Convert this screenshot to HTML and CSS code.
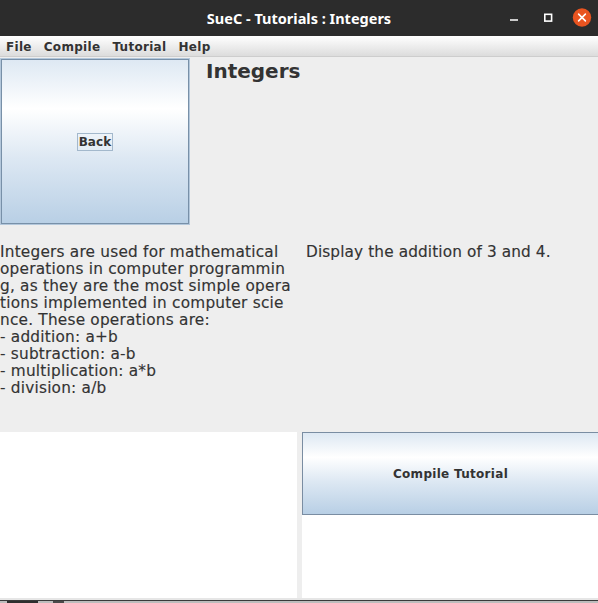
FILE: index.html
```html
<!DOCTYPE html>
<html lang="en">
<head>
<meta charset="utf-8">
<title>SueC - Tutorials : Integers</title>
<link rel="stylesheet" href="styles.css">
</head>
<body>
<div class="window">
  <header class="titlebar">
    <div class="tb-side"></div>
    <div class="title">SueC - Tutorials : Integers</div>
    <div class="tb-side tb-controls">
      <svg class="controls" width="98" height="36" viewBox="0 0 98 36">
        <line x1="10" y1="20" x2="18" y2="20" stroke="#ffffff" stroke-width="1.5"/>
        <rect x="44.8" y="14.3" width="6.8" height="6.8" fill="none" stroke="#ffffff" stroke-width="1.6"/>
        <circle cx="82" cy="17.5" r="9.2" fill="#e95420"/>
        <line x1="78.6" y1="14.1" x2="85.4" y2="20.9" stroke="#ffffff" stroke-width="1.6" stroke-linecap="round"/>
        <line x1="85.4" y1="14.1" x2="78.6" y2="20.9" stroke="#ffffff" stroke-width="1.6" stroke-linecap="round"/>
      </svg>
    </div>
  </header>
  <nav class="menubar">
    <span class="menu">File</span>
    <span class="menu">Compile</span>
    <span class="menu">Tutorial</span>
    <span class="menu">Help</span>
  </nav>
  <main class="content">
    <section class="top">
      <button class="btn back" type="button"><span class="focus">Back</span></button>
      <h1 class="heading">Integers</h1>
    </section>
    <section class="texts">
      <div class="textarea">Integers are used for mathematical
operations in computer programmin
g, as they are the most simple opera
tions implemented in computer scie
nce. These operations are:
- addition: a+b
- subtraction: a-b
- multiplication: a*b
- division: a/b</div>
      <div class="task">Display the addition of 3 and 4.</div>
    </section>
    <section class="bottom">
      <div class="pane"></div>
      <div class="right">
        <button class="btn compile" type="button">Compile Tutorial</button>
        <div class="pane grow"></div>
      </div>
    </section>
  </main>
  <footer class="desk">
    <div class="edge"></div>
    <div class="strip">
      <span class="blk b1"></span>
      <span class="blk b2"></span>
    </div>
  </footer>
</div>
</body>
</html>
```
FILE: styles.css
```css
html, body {
  margin: 0;
  padding: 0;
}
body {
  width: 598px;
  height: 603px;
  overflow: hidden;
  background: #eeeeee;
  font-family: "DejaVu Sans", sans-serif;
  color: #333333;
}
.window {
  width: 598px;
  height: 603px;
  display: flex;
  flex-direction: column;
  overflow: hidden;
}

/* title bar */
.titlebar {
  height: 36px;
  flex: 0 0 36px;
  background: #2c2c2c;
  display: grid;
  grid-template-columns: 1fr auto 1fr;
  align-items: center;
}
.title {
  font-family: "Noto Sans", "DejaVu Sans", sans-serif;
  font-weight: 700;
  font-size: 14.5px;
  color: #ffffff;
  line-height: 20px;
  margin-top: -1px;
}
.tb-controls {
  display: flex;
  justify-content: flex-end;
}
.controls {
  display: block;
}

/* menu bar */
.menubar {
  height: 20px;
  flex: 0 0 20px;
  border-bottom: 1px solid #cdcdcd;
  background: linear-gradient(#ffffff, #dcdcdc);
  display: flex;
  align-items: center;
  padding-left: 6px;
  gap: 12px;
}
.menu {
  font-weight: 700;
  font-size: 12px;
  letter-spacing: 0.3px;
  line-height: 20px;
  padding-top: 1px;
  color: #333333;
}

/* content */
.content {
  flex: 1 1 auto;
  display: flex;
  flex-direction: column;
}
.top {
  display: flex;
  align-items: flex-start;
  padding-top: 1px;
  height: 167px;
}
.btn {
  margin: 0;
  padding: 0;
  box-sizing: border-box;
  font-family: "DejaVu Sans", sans-serif;
  font-weight: 700;
  font-size: 12px;
  letter-spacing: 0.3px;
  color: #333333;
  display: flex;
  align-items: center;
  justify-content: center;
  background: linear-gradient(#dde8f3 0%, #ffffff 30%, #dde8f3 60%, #b8cfe5 100%);
}
.back {
  width: 190px;
  height: 167px;
  flex: 0 0 190px;
  border: 1px solid #b3c7db;
  box-shadow: inset 0 0 0 1px #7890a8;
}
.focus {
  border: 1px solid #a3b8cc;
  padding: 0 1px 0 1px;
  line-height: 16px;
  letter-spacing: 0.1px;
}
.heading {
  margin: 1px 0 0 16px;
  font-size: 20px;
  line-height: 24px;
  font-weight: 700;
  color: #333333;
}

.texts {
  display: grid;
  grid-template-columns: 306px 1fr;
  margin-top: 19px;
  height: 188px;
}
.textarea, .task {
  font-size: 15.3px;
  line-height: 17px;
  letter-spacing: 0.22px;
  white-space: pre;
  color: #333333;
  -webkit-text-stroke: 0.15px #333333;
}
.task {
  letter-spacing: 0.12px;
}

.bottom {
  display: grid;
  grid-template-columns: 297px 297px;
  column-gap: 5px;
  height: 166px;
}
.pane {
  background: #ffffff;
}
.right {
  display: flex;
  flex-direction: column;
}
.compile {
  height: 83px;
  flex: 0 0 83px;
  width: 297px;
  border: 1px solid #7a8da2;
}
.grow {
  flex: 1 1 auto;
}

/* desktop edge below window */
.desk {
  flex: 0 0 5px;
  display: flex;
  flex-direction: column;
}
.edge {
  height: 2px;
  background: #e6e6e6;
  border-bottom: 1px solid #3a3a3a;
}
.strip {
  height: 2px;
  background: #bdbdbd;
  display: flex;
}
.blk {
  display: block;
  height: 2px;
  background: #2e2e2e;
}
.b1 {
  margin-left: 7px;
  width: 31px;
}
.b2 {
  margin-left: 15px;
  width: 11px;
  background: #4a4a4a;
}
```
